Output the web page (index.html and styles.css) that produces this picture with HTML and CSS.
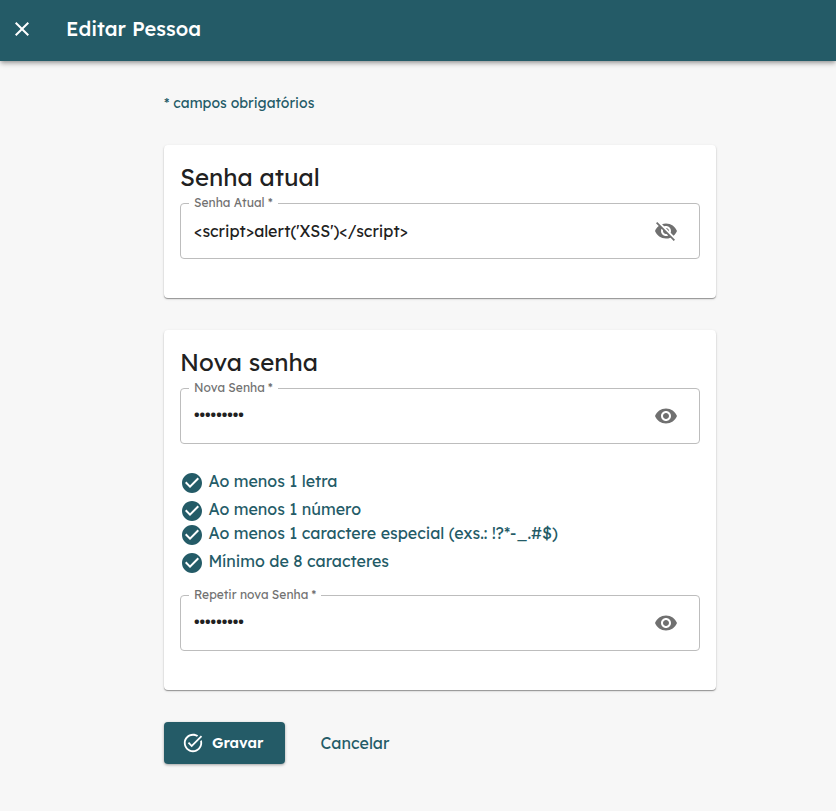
FILE: index.html
```html
<!DOCTYPE html>
<html lang="pt-BR">
<head>
<meta charset="utf-8">
<title>Editar Pessoa</title>
<link rel="stylesheet" href="styles.css">
</head>
<body>
<svg class="defs" aria-hidden="true">
  <symbol id="eye" viewBox="0 0 24 24"><path d="M12 4.500C7 4.500 2.730 7.610 1 12c1.730 4.390 6 7.500 11 7.500s9.270-3.110 11-7.500c-1.730-4.390-6-7.500-11-7.500zM12 17c-2.760 0-5-2.240-5-5s2.240-5 5-5 5 2.240 5 5-2.240 5-5 5zm0-8c-1.660 0-3 1.340-3 3s1.340 3 3 3 3-1.340 3-3-1.340-3-3-3z"/></symbol>
  <symbol id="eye-off" viewBox="0 0 24 24"><path d="M12 7c2.760 0 5 2.240 5 5 0 .65-.13 1.260-.36 1.830l2.920 2.920c1.510-1.260 2.700-2.890 3.430-4.750-1.730-4.390-6-7.500-11-7.500-1.400 0-2.740.25-3.980.7l2.160 2.160C10.740 7.130 11.350 7 12 7zM2 4.270l2.280 2.280.46.46C3.080 8.300 1.780 10.020 1 12c1.730 4.390 6 7.500 11 7.500 1.550 0 3.030-.3 4.380-.84l.42.42L19.730 22 21 20.730 3.270 3 2 4.270zM7.530 9.800l1.550 1.550c-.05.21-.08.43-.08.65 0 1.660 1.340 3 3 3 .22 0 .44-.03.65-.08l1.550 1.550c-.67.33-1.410.53-2.200.53-2.760 0-5-2.240-5-5 0-.79.2-1.530.53-2.200zm4.310-.78l3.150 3.150.02-.16c0-1.660-1.340-3-3-3l-.17.01z"/></symbol>
  <symbol id="check" viewBox="0 0 24 24"><path d="M12 2C6.480 2 2 6.480 2 12s4.480 10 10 10 10-4.480 10-10S17.520 2 12 2zm-2 15l-5-5 1.410-1.410L10 14.170l7.590-7.590L19 8l-9 9z"/></symbol>
</svg>
<header class="bar">
  <svg class="close" viewBox="0 0 24 24"><path d="M19 6.410 17.590 5 12 10.590 6.410 5 5 6.410 10.590 12 5 17.590 6.410 19 12 13.410 17.590 19 19 17.590 13.410 12z"/></svg>
  <h1>Editar Pessoa</h1>
</header>
<main class="content">
  <p class="note">* campos obrigatórios</p>
  <section class="card">
    <h2>Senha atual</h2>
    <div class="field"><label>Senha Atual *</label><span class="value">&lt;script&gt;alert('XSS')&lt;/script&gt;</span><svg class="icon"><use href="#eye-off"/></svg></div>
  </section>
  <section class="card">
    <h2>Nova senha</h2>
    <div class="field"><label>Nova Senha *</label><span class="value dots">•••••••••</span><svg class="icon"><use href="#eye"/></svg></div>
    <ul class="rules">
      <li><svg class="tick"><use href="#check"/></svg><span>Ao menos 1 letra</span></li>
      <li class="tight"><svg class="tick"><use href="#check"/></svg><span>Ao menos 1 número</span></li>
      <li><svg class="tick"><use href="#check"/></svg><span>Ao menos 1 caractere especial (exs.: !?*-_.#$)</span></li>
      <li><svg class="tick"><use href="#check"/></svg><span>Mínimo de 8 caracteres</span></li>
    </ul>
    <div class="field"><label>Repetir nova Senha *</label><span class="value dots">•••••••••</span><svg class="icon"><use href="#eye"/></svg></div>
  </section>
  <div class="actions">
    <button class="save"><svg viewBox="0 0 24 24"><path d="M22 5.180 10.590 16.600l-4.240-4.240 1.410-1.410 2.830 2.830 10-10L22 5.180zm-2.210 5.040c.13.570.21 1.170.21 1.780 0 4.420-3.580 8-8 8s-8-3.580-8-8 3.580-8 8-8c1.580 0 3.040.46 4.280 1.250l1.440-1.440C16.100 2.670 14.130 2 12 2 6.480 2 2 6.480 2 12s4.480 10 10 10 10-4.480 10-10c0-1.190-.22-2.330-.6-3.390l-1.610 1.610z"/></svg><span>Gravar</span></button>
    <button class="cancel">Cancelar</button>
  </div>
</main>
</body>
</html>
```
FILE: styles.css
```css
* { box-sizing: border-box; }
body { margin: 0; min-height: 811px; background: #f7f7f7; color: #212121; font-family: Lexend, Inter, sans-serif; }
h1, h2, p, ul { margin: 0; padding: 0; font-weight: 400; }
.defs { display: none; }
.bar { height: 61px; padding: 0 0 3px 10px; display: flex; align-items: center; gap: 32px; background: #245b67; color: #fff; box-shadow: 0 2px 4px -1px rgba(0,0,0,.3), 0 4px 5px rgba(0,0,0,.1), 0 1px 6px rgba(0,0,0,.1); }
.close { width: 24px; height: 24px; fill: #fff; }
h1 { font-size: 20px; font-weight: 500; line-height: 28px; }
.content { width: 552px; margin-left: 164px; padding-top: 32px; }
.note { font-size: 14px; line-height: 20px; color: #245b67; margin-bottom: 32px; }
.card { background: #fff; border-radius: 4px; padding: 16px; margin-bottom: 32px; box-shadow: 0 1px 1px rgba(0,0,0,.35), 0 1px 3px rgba(0,0,0,.12); }
.card:nth-of-type(1) { height: 153px; }
.card:nth-of-type(2) { height: 360px; }
h2 { font-size: 24px; line-height: 32px; height: 42px; }
.field { position: relative; height: 56px; padding: 0 21px 0 13px; border: 1px solid #bdbdbd; border-radius: 4px; display: flex; align-items: center; justify-content: space-between; }
label { position: absolute; top: -9px; left: 8px; padding: 0 5px; line-height: 16px; font-size: 12px; color: #717171; background: #fff; white-space: nowrap; }
.value { font-size: 16px; }
.dots { padding-bottom: 2px; }
.icon { width: 24px; height: 24px; fill: #707070; }
.rules { list-style: none; color: #245b67; margin: 24px 0 19px; }
li { display: flex; align-items: flex-start; gap: 4.5px; height: 28px; font-size: 16px; line-height: 26px; white-space: nowrap; }
li.tight { height: 24px; }
.tick { width: 24px; height: 24px; margin-top: 3px; fill: #245b67; }
.actions { display: flex; align-items: center; }
button { border: 0; font: 500 16px Lexend, Inter, sans-serif; height: 42px; }
.save { width: 121px; background: #245b67; color: #fff; border-radius: 4px; padding: 0 0 1px 18px; display: flex; align-items: center; gap: 8px; font-size: 14.7px; font-weight: 600; box-shadow: 0 1px 3px rgba(0,0,0,.35); }
.save svg { width: 22px; height: 22px; fill: #fff; }
.cancel { margin-left: 35.5px; padding: 0; background: none; color: #245b67; font-weight: 400; }
```
